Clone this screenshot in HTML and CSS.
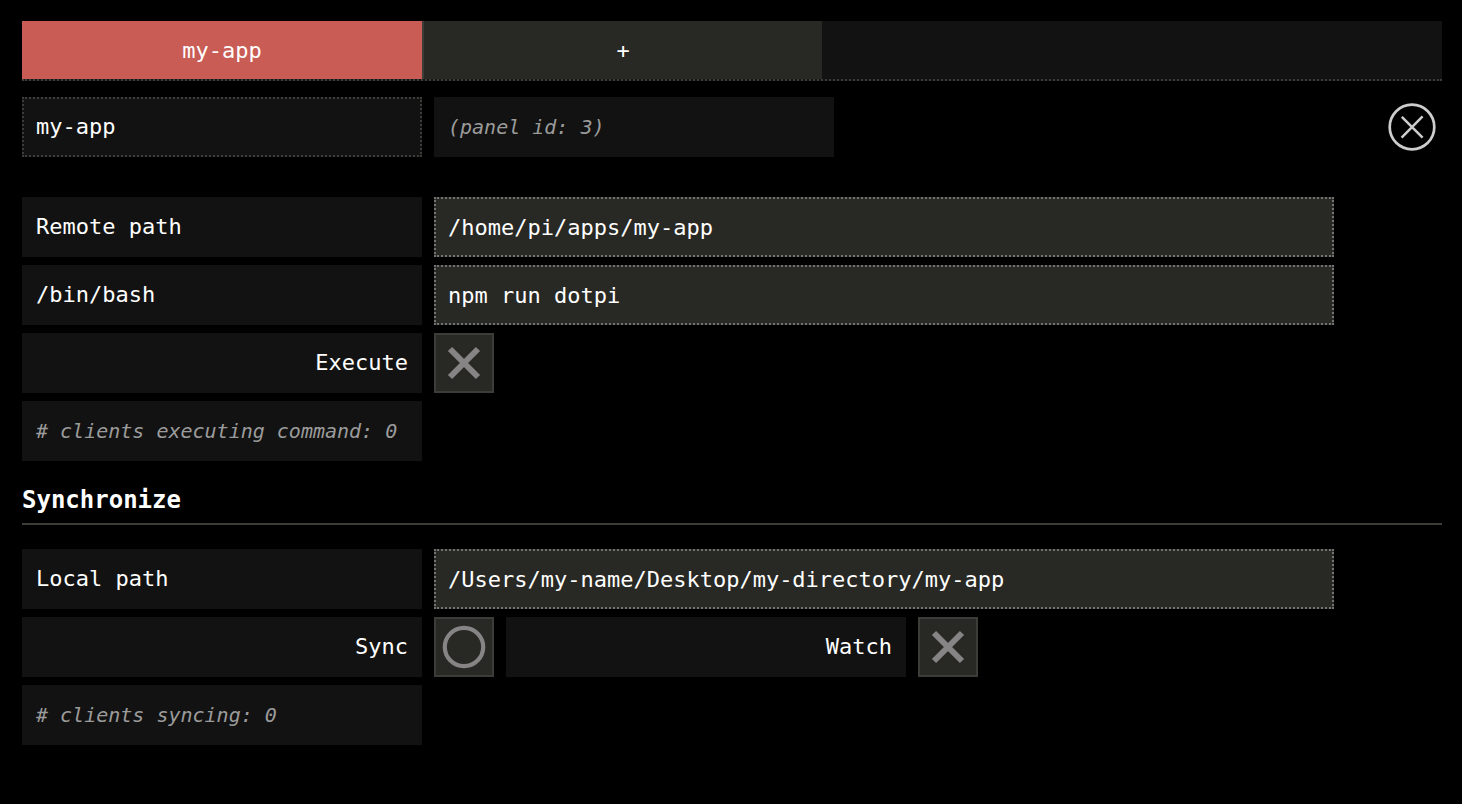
FILE: index.html
```html
<!DOCTYPE html>
<html lang="en">
<head>
<meta charset="utf-8">
<meta name="viewport" content="width=device-width, initial-scale=1">
<title>my-app</title>
<link rel="stylesheet" href="styles.css">
</head>
<body>
<main class="page">
  <nav class="tabs">
    <button type="button" class="tab tab-active">my-app</button>
    <button type="button" class="tab" aria-label="Add panel">+</button>
  </nav>

  <header class="row panel-header">
    <input class="cell name-input" type="text" value="my-app" aria-label="Panel name">
    <p class="cell note">(panel id: 3)</p>
    <button type="button" class="close" aria-label="Close panel">
      <svg class="close-icon" viewBox="0 0 60 60" fill="none" stroke="#cdcdcd">
        <circle cx="30" cy="30" r="22.3" stroke-width="2.7"/>
        <path d="M19.8 19.8L40.6 40.6M40.6 19.4L19.6 40.6" stroke-width="2.5"/>
      </svg>
    </button>
  </header>

  <section class="group">
    <div class="row">
      <label class="cell" for="remote-path">Remote path</label>
      <input class="text-input" id="remote-path" type="text" value="/home/pi/apps/my-app">
    </div>
    <div class="row">
      <label class="cell" for="command">/bin/bash</label>
      <input class="text-input" id="command" type="text" value="npm run dotpi">
    </div>
    <div class="row">
      <label class="cell cell-right" for="execute">Execute</label>
      <button type="button" class="square" id="execute">
        <svg class="square-icon" viewBox="0 0 56 56" fill="none" stroke="#868484"><path d="M14 14L42 42M42 14L14 42" stroke-width="6"/></svg>
      </button>
    </div>
    <p class="cell note"># clients executing command: 0</p>
  </section>

  <h2 class="heading">Synchronize</h2>

  <section class="group">
    <div class="row">
      <label class="cell" for="local-path">Local path</label>
      <input class="text-input" id="local-path" type="text" value="/Users/my-name/Desktop/my-directory/my-app">
    </div>
    <div class="row">
      <label class="cell cell-right" for="sync">Sync</label>
      <button type="button" class="square" id="sync">
        <svg class="square-icon" viewBox="0 0 56 56" fill="none" stroke="#868484"><circle cx="28" cy="28" r="19.2" stroke-width="4.2"/></svg>
      </button>
      <label class="cell cell-right" for="watch">Watch</label>
      <button type="button" class="square" id="watch">
        <svg class="square-icon" viewBox="0 0 56 56" fill="none" stroke="#868484"><path d="M14 14L42 42M42 14L14 42" stroke-width="6"/></svg>
      </button>
    </div>
    <p class="cell note"># clients syncing: 0</p>
  </section>
</main>
</body>
</html>
```

FILE: styles.css
```css
* {
  box-sizing: border-box;
}

body {
  margin: 0;
  background: #000;
  color: #fff;
  font-family: "DejaVu Sans Mono", monospace;
  font-size: 22px;
}

button,
input {
  margin: 0;
  border: 0;
  border-radius: 0;
  color: inherit;
  font: inherit;
}

.page {
  padding: 21px 20px 20px 22px;
}

.tabs {
  display: flex;
  background: #121212;
  border-bottom: 2px dotted #3c3c38;
}

.tab {
  flex: 0 1 400px;
  height: 58px;
  padding: 0 12px;
  background: #282824;
}

.tab + .tab {
  border-left: 2px solid #3c3c38;
}

.tab-active {
  background: #c95c55;
}

.row {
  display: flex;
  gap: 12px;
}

.panel-header {
  margin: 16px 0 40px;
}

.cell {
  flex: 0 1 400px;
  width: 400px;
  max-width: 100%;
  min-width: 0;
  height: 60px;
  margin: 0;
  padding: 0 14px;
  background: #121212;
  line-height: 60px;
  white-space: nowrap;
}

.cell-right {
  text-align: right;
}

.name-input {
  padding: 0 12px;
  border: 2px dotted #3c3c38;
}

.note {
  color: #9b9b9b;
  font-size: 20px;
  font-style: italic;
}

.close {
  flex: none;
  width: 60px;
  height: 60px;
  margin-left: auto;
  padding: 0;
  background: none;
}

.close-icon,
.square-icon {
  display: block;
  width: 100%;
  height: 100%;
}

.group {
  display: flex;
  flex-direction: column;
  gap: 8px;
}

.group > .cell {
  flex: none;
}

.text-input {
  flex: 0 1 900px;
  min-width: 0;
  height: 60px;
  padding: 0 12px;
  background: #282824;
  border: 2px dotted #737373;
}

.square {
  flex: none;
  width: 60px;
  height: 60px;
  padding: 0;
  background: #282824;
  border: 2px solid #3c3c38;
}

.heading {
  margin: 16px 0 24px;
  border-bottom: 2px solid #3c3c38;
  font-size: 24px;
  line-height: 46px;
}
```
